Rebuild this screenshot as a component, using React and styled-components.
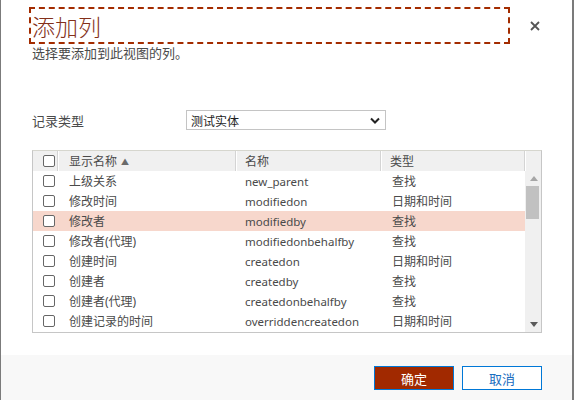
import React, { useState } from "react";
import styled, { createGlobalStyle } from "styled-components";

const GlobalStyle = createGlobalStyle`
  html, body {
    margin: 0;
    padding: 0;
    background: #ffffff;
  }
  * {
    box-sizing: border-box;
  }
`;

const fields = [
  { id: 1, label: "上级关系", name: "new_parent", type: "查找" },
  { id: 2, label: "修改时间", name: "modifiedon", type: "日期和时间" },
  { id: 3, label: "修改者", name: "modifiedby", type: "查找" },
  { id: 4, label: "修改者(代理)", name: "modifiedonbehalfby", type: "查找" },
  { id: 5, label: "创建时间", name: "createdon", type: "日期和时间" },
  { id: 6, label: "创建者", name: "createdby", type: "查找" },
  { id: 7, label: "创建者(代理)", name: "createdonbehalfby", type: "查找" },
  { id: 8, label: "创建记录的时间", name: "overriddencreatedon", type: "日期和时间" },
];

function App() {
  const [hovered] = useState(3);

  return (
    <>
      <GlobalStyle />
      <Dialog>
        <Header>
          <TitleBox>
            <Title>添加列</Title>
          </TitleBox>
          <CloseButton aria-label="关闭">
            <svg width="10" height="10" viewBox="0 0 10 10">
              <path d="M1 1 L9 9 M9 1 L1 9" stroke="#555" strokeWidth="1.8" fill="none" />
            </svg>
          </CloseButton>
        </Header>
        <Subtitle>选择要添加到此视图的列。</Subtitle>

        <TypeRow>
          <Label>记录类型</Label>
          <Select>
            <span>测试实体</span>
            <svg width="10" height="7" viewBox="0 0 10 7">
              <polyline points="1,1.5 5,5.5 9,1.5" stroke="#222" strokeWidth="2" fill="none" />
            </svg>
          </Select>
        </TypeRow>

        <Grid>
          <HeadRow>
            <HeadCell $w={25} $pad={10}>
              <Check />
            </HeadCell>
            <HeadCell $w={178} $pad={11}>
              显示名称
              <SortArrow>▲</SortArrow>
            </HeadCell>
            <HeadCell $w={145} $pad={9}>名称</HeadCell>
            <HeadCell $w={144} $pad={9}>类型</HeadCell>
            <HeadSpacer />
          </HeadRow>
          <Body>
            <Rows>
              {fields.map((f) => (
                <Row key={f.id} $active={f.id === hovered}>
                  <Cell $w={25} $pad={10}>
                    <Check />
                  </Cell>
                  <Cell $w={178} $pad={11}>{f.label}</Cell>
                  <Cell $w={145} $pad={9} $latin>{f.name}</Cell>
                  <Cell $w={144} $pad={11}>{f.type}</Cell>
                </Row>
              ))}
            </Rows>
            <Scrollbar>
              <ArrowBox>
                <svg width="8" height="5" viewBox="0 0 8 5">
                  <polygon points="0,5 4,0 8,5" fill="#a6a6a6" />
                </svg>
              </ArrowBox>
              <Track>
                <Thumb />
              </Track>
              <ArrowBox>
                <svg width="8" height="5" viewBox="0 0 8 5">
                  <polygon points="0,0 8,0 4,5" fill="#5a5a5a" />
                </svg>
              </ArrowBox>
            </Scrollbar>
          </Body>
        </Grid>

        <Footer>
          <Button $primary>确定</Button>
          <Button>取消</Button>
        </Footer>
      </Dialog>
    </>
  );
}

const Dialog = styled.div`
  width: 574px;
  height: 400px;
  display: flex;
  flex-direction: column;
  background: #ffffff;
  border-left: 1px solid #7b7b7b;
  border-right: 2px solid #7b7b7b;
  font-family: "Noto Sans", "Noto Sans CJK SC", sans-serif;
  color: #4a4a4a;
  overflow: hidden;
`;

const Header = styled.div`
  display: flex;
  align-items: center;
  padding: 7px 0 0 28px;
`;

const TitleBox = styled.div`
  width: 481px;
  height: 37px;
  border: 2px dashed #a32c00;
  display: flex;
  align-items: center;
  padding-left: 1px;
`;

const Title = styled.h1`
  margin: 0;
  font-family: "Noto Sans CJK SC", sans-serif;
  font-size: 23px;
  font-weight: 300;
  line-height: 30px;
  color: #83301a;
`;

const CloseButton = styled.button`
  margin-left: 19px;
  width: 12px;
  height: 12px;
  padding: 0;
  border: none;
  background: transparent;
  display: flex;
  align-items: center;
  justify-content: center;
`;

const Subtitle = styled.p`
  margin: 0;
  padding-left: 31px;
  font-family: "Noto Sans CJK SC", sans-serif;
  font-size: 13px;
  line-height: 17px;
  color: #4a4a4a;
`;

const TypeRow = styled.div`
  display: flex;
  align-items: center;
  margin-top: 49px;
  padding-left: 31px;
  height: 20px;
`;

const Label = styled.span`
  width: 154px;
  font-family: "Noto Sans CJK SC", sans-serif;
  font-size: 13px;
  line-height: 20px;
  padding-top: 1px;
  color: #4a4a4a;
`;

const Select = styled.div`
  width: 200px;
  height: 20px;
  border: 1px solid #c4c4c4;
  display: flex;
  align-items: center;
  justify-content: space-between;
  padding: 0 4px 0 4px;
  font-family: "Noto Sans CJK SC", sans-serif;
  font-size: 12px;
  color: #222222;

  svg {
    margin-right: 1px;
  }
`;

const Grid = styled.div`
  margin: 20px 0 0 31px;
  width: 510px;
  height: 183px;
  border: 1px solid #c6c6c6;
  border-top-color: #d6d6ce;
  display: flex;
  flex-direction: column;
`;

const HeadRow = styled.div`
  display: flex;
  height: 20px;
  background: #f0f0f0;
  font-size: 12px;
  color: #4a4a4a;
`;

const HeadCell = styled.div`
  width: ${(p) => p.$w}px;
  flex-shrink: 0;
  display: flex;
  align-items: center;
  padding-left: ${(p) => p.$pad}px;
  border-right: 1px solid #d4d4d4;
  box-shadow: 1px 0 0 #ffffff;
  white-space: nowrap;
`;

const HeadSpacer = styled.div`
  flex: 1;
`;

const SortArrow = styled.span`
  font-size: 8px;
  color: #6a6a6a;
  margin-left: 4px;
  margin-top: 1px;
`;

const Body = styled.div`
  display: flex;
  flex: 1;
`;

const Rows = styled.div`
  width: 492px;
  display: flex;
  flex-direction: column;
`;

const Row = styled.div`
  display: flex;
  height: 20px;
  background: ${(p) => (p.$active ? "#f7d7cc" : "#ffffff")};
  font-size: 12px;
  color: #4a4a4a;
`;

const Cell = styled.div`
  width: ${(p) => p.$w}px;
  flex-shrink: 0;
  display: flex;
  align-items: center;
  padding-left: ${(p) => p.$pad}px;
  font-size: ${(p) => (p.$latin ? "11.5px" : "12px")};
  white-space: nowrap;
`;

const Check = styled.span`
  display: inline-block;
  width: 12px;
  height: 12px;
  border: 1px solid #666666;
  border-radius: 2px;
  background: #ffffff;
`;

const Scrollbar = styled.div`
  width: 16px;
  display: flex;
  flex-direction: column;
  background: #f0f0f0;
`;

const ArrowBox = styled.div`
  height: 15px;
  display: flex;
  align-items: center;
  justify-content: center;
  padding-left: 1px;
`;

const Track = styled.div`
  flex: 1;
  padding: 0 2px 0 1px;
`;

const Thumb = styled.div`
  height: 33px;
  background: #c1c1c1;
`;

const Footer = styled.div`
  margin-top: 22px;
  flex: 1;
  background: #f8f8f8;
  display: flex;
  justify-content: flex-end;
  align-items: flex-start;
  gap: 8px;
  padding: 11px 30px 0 0;
`;

const Button = styled.button`
  width: 80px;
  height: 24px;
  border: 1px solid #0078d7;
  background: ${(p) => (p.$primary ? "#a12900" : "#ffffff")};
  color: ${(p) => (p.$primary ? "#ffffff" : "#1a6dc0")};
  font-family: "Noto Sans CJK SC", sans-serif;
  font-size: 13px;
  padding: 0;
`;

export default App;
